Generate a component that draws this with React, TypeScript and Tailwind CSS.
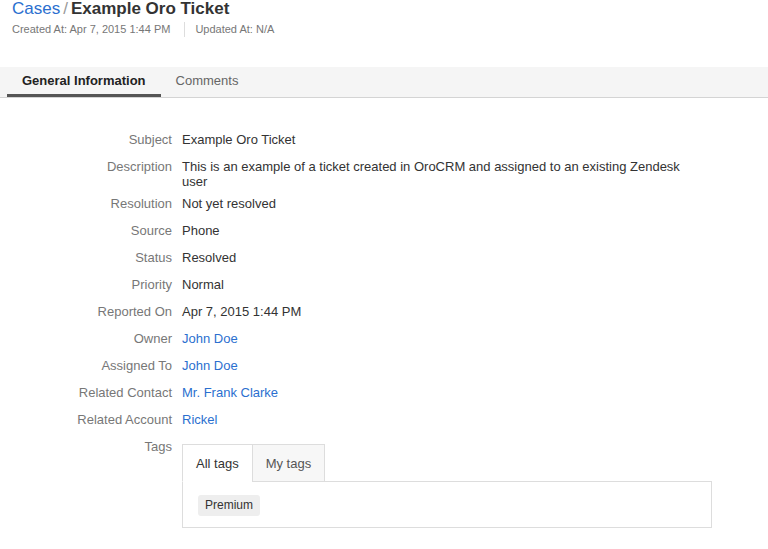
import { useState } from 'react'

type Field = { label: string; value: string; link?: boolean }

const FIELDS: Field[] = [
  { label: 'Subject', value: 'Example Oro Ticket' },
  {
    label: 'Description',
    value: 'This is an example of a ticket created in OroCRM and assigned to an existing Zendesk user',
  },
  { label: 'Resolution', value: 'Not yet resolved' },
  { label: 'Source', value: 'Phone' },
  { label: 'Status', value: 'Resolved' },
  { label: 'Priority', value: 'Normal' },
  { label: 'Reported On', value: 'Apr 7, 2015 1:44 PM' },
  { label: 'Owner', value: 'John Doe', link: true },
  { label: 'Assigned To', value: 'John Doe', link: true },
  { label: 'Related Contact', value: 'Mr. Frank Clarke', link: true },
  { label: 'Related Account', value: 'Rickel', link: true },
]

export default function App() {
  const [tab, setTab] = useState('general')
  const [tagTab, setTagTab] = useState('all')

  return (
    <div className="min-h-screen bg-white font-['Liberation_Sans',Arial,sans-serif] text-[#444]">
      {/* header */}
      <div className="px-3">
        <h1 className="flex items-baseline text-[17px] leading-[17px]">
          <a href="#" className="text-[#2b6fcf]">Cases</a>
          <span className="mx-[3px] text-[#999]">/</span>
          <span className="font-bold text-[#333]">Example Oro Ticket</span>
        </h1>
        <div className="mt-[5px] flex items-center text-[11px] leading-[15px] text-[#777]">
          <span className="pr-[14px]">Created At: Apr 7, 2015 1:44 PM</span>
          <span className="h-[15px] w-px bg-[#ddd]" />
          <span className="pl-[10px]">Updated At: N/A</span>
        </div>
      </div>

      {/* tabs */}
      <div className="mt-[30px] flex h-[31px] border-b border-[#d4d4d4] bg-[#f5f5f5] pl-[7px] text-[13px]">
        <button
          onClick={() => setTab('general')}
          className={`flex items-start px-[15px] pt-[6px] leading-[15px] ${
            tab === 'general' ? 'border-b-[3px] border-[#555] font-bold text-[#222]' : 'text-[#666]'
          }`}
        >
          General Information
        </button>
        <button
          onClick={() => setTab('comments')}
          className={`flex items-start px-[15px] pt-[6px] leading-[15px] ${
            tab === 'comments' ? 'border-b-[3px] border-[#555] font-bold text-[#222]' : 'text-[#666]'
          }`}
        >
          Comments
        </button>
      </div>

      {/* fields */}
      <div className="pt-[34px] text-[13px] leading-[15px]">
        {FIELDS.map((f) => (
          <div key={f.label} className="mb-[7px] flex min-h-[20px] items-start">
            <div className="w-[172px] shrink-0 text-right text-[#777]">{f.label}</div>
            <div className="ml-[10px] w-[520px]">
              {f.link ? (
                <a href="#" className="text-[#2b6fcf]">{f.value}</a>
              ) : (
                <span className="text-[#333]">{f.value}</span>
              )}
            </div>
          </div>
        ))}

        <div className="flex items-start">
          <div className="w-[172px] shrink-0 text-right text-[#777]">Tags</div>
          <div className="ml-[10px] mt-[5px] w-[530px]">
            <div className="relative z-10 -mb-px flex">
              <button
                onClick={() => setTagTab('all')}
                className={`h-[38px] border border-[#ddd] px-[13px] leading-[15px] ${
                  tagTab === 'all' ? 'border-b-white bg-white text-[#333]' : 'bg-[#f7f7f7] text-[#555]'
                }`}
              >
                All tags
              </button>
              <button
                onClick={() => setTagTab('my')}
                className={`-ml-px h-[38px] border border-[#ddd] px-[13px] leading-[15px] ${
                  tagTab === 'my' ? 'border-b-white bg-white text-[#333]' : 'bg-[#f7f7f7] text-[#555]'
                }`}
              >
                My tags
              </button>
            </div>
            <div className="h-[47px] border border-[#ddd] px-[15px] pt-[13px]">
              <span className="inline-block rounded-[3px] bg-[#eee] px-[7px] py-[3px] text-[12px] leading-[15px] text-[#333]">
                Premium
              </span>
            </div>
          </div>
        </div>
      </div>
    </div>
  )
}
